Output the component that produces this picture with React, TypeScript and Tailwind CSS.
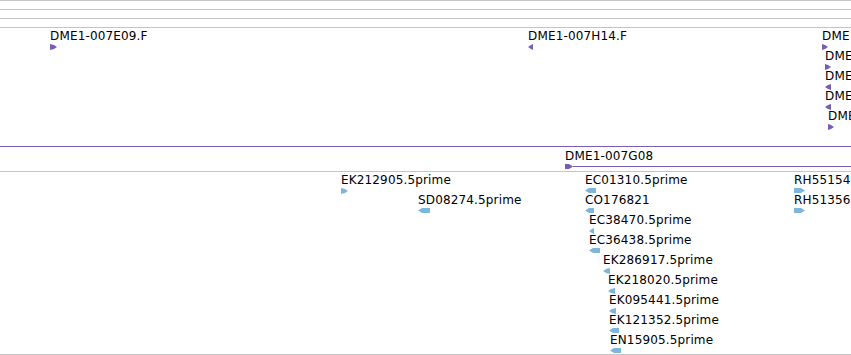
type Dir = "l" | "r";

interface Feature {
  x: number;
  row: number;
  label: string;
  w: number;
  dir: Dir;
}

const PURPLE = "#7b5cb5";
const BLUE = "#7db5dd";

const track1: Feature[] = [
  { x: 50, row: 0, label: "DME1-007E09.F", w: 7, dir: "r" },
  { x: 528, row: 0, label: "DME1-007H14.F", w: 5, dir: "l" },
  { x: 822, row: 0, label: "DME1-007K02.F", w: 6, dir: "r" },
  { x: 825, row: 1, label: "DME1-007K05.F", w: 6, dir: "r" },
  { x: 825, row: 2, label: "DME1-007K11.F", w: 6, dir: "l" },
  { x: 825, row: 3, label: "DME1-007L03.F", w: 6, dir: "l" },
  { x: 828, row: 4, label: "DME1-007L09.F", w: 6, dir: "r" },
];

const track3: Feature[] = [
  { x: 341, row: 0, label: "EK212905.5prime", w: 7, dir: "r" },
  { x: 418, row: 1, label: "SD08274.5prime", w: 12, dir: "l" },
  { x: 585, row: 0, label: "EC01310.5prime", w: 11, dir: "l" },
  { x: 585, row: 1, label: "CO176821", w: 9, dir: "l" },
  { x: 589, row: 2, label: "EC38470.5prime", w: 5, dir: "l" },
  { x: 589, row: 3, label: "EC36438.5prime", w: 11, dir: "l" },
  { x: 603, row: 4, label: "EK286917.5prime", w: 7, dir: "l" },
  { x: 608, row: 5, label: "EK218020.5prime", w: 7, dir: "l" },
  { x: 609, row: 6, label: "EK095441.5prime", w: 7, dir: "l" },
  { x: 609, row: 7, label: "EK121352.5prime", w: 10, dir: "l" },
  { x: 610, row: 8, label: "EN15905.5prime", w: 11, dir: "l" },
  { x: 794, row: 0, label: "RH55154.5prime", w: 11, dir: "r" },
  { x: 794, row: 1, label: "RH51356.5prime", w: 11, dir: "r" },
];

// feature glyph: arrow block for long features, flag triangle for short ones
function Glyph({ w, dir, color }: { w: number; dir: Dir; color: string }) {
  const small = w <= 7;
  const h = small ? 6 : 5;
  const tip = Math.min(4, w - 1);
  const pts = small
    ? dir === "r"
      ? `0,0 ${w - 3},1 ${w},${h / 2} ${w - 3},${h - 1} 0,${h}`
      : `${w},0 3,1 0,${h / 2} 3,${h - 1} ${w},${h}`
    : dir === "r"
      ? `0,0 ${w - tip},0 ${w},${h / 2} ${w - tip},${h} 0,${h}`
      : `${tip},0 ${w},0 ${w},${h} ${tip},${h} 0,${h / 2}`;
  return (
    <svg width={w} height={h} viewBox={`0 0 ${w} ${h}`} className="block">
      <polygon points={pts} fill={color} />
    </svg>
  );
}

function Item({ f, top, color }: { f: Feature; top: number; color: string }) {
  return (
    <div
      className="absolute flex flex-col gap-[1px]"
      style={{ left: f.x, top: top + f.row * 20 }}
    >
      <span className="whitespace-nowrap text-[12px] leading-[14px] tracking-[0.15px] text-black">
        {f.label}
      </span>
      <Glyph w={f.w} dir={f.dir} color={color} />
    </div>
  );
}

export default function App() {
  return (
    <div
      className="relative w-[851px] h-[355px] overflow-hidden bg-white"
      style={{ fontFamily: '"DejaVu Sans", sans-serif' }}
    >
      <div className="h-[9px] border-t border-[#c4c4c4]" />
      <div className="h-[9px] border-t border-[#c4c4c4]" />
      <div className="h-[9px] border-t border-[#c4c4c4]" />
      <div className="relative h-[119px] border-t border-[#c4c4c4]">
        {track1.map((f) => (
          <Item key={f.label + f.x} f={f} top={1} color={PURPLE} />
        ))}
      </div>
      <div className="relative h-[25px] border-t border-[#7a5cb8]">
        <div className="absolute left-[565px] top-[2px] flex flex-col gap-[1px]">
          <span className="whitespace-nowrap text-[12px] leading-[14px] tracking-[0.15px] text-black">
            DME1-007G08
          </span>
          <div className="flex items-center">
            <Glyph w={8} dir="r" color={PURPLE} />
            <div className="h-[1px] w-[300px] bg-[#7a5cb8]" />
          </div>
        </div>
      </div>
      <div className="relative h-[184px] border-y border-[#c4c4c4]">
        {track3.map((f) => (
          <Item key={f.label} f={f} top={1} color={BLUE} />
        ))}
      </div>
    </div>
  );
}
